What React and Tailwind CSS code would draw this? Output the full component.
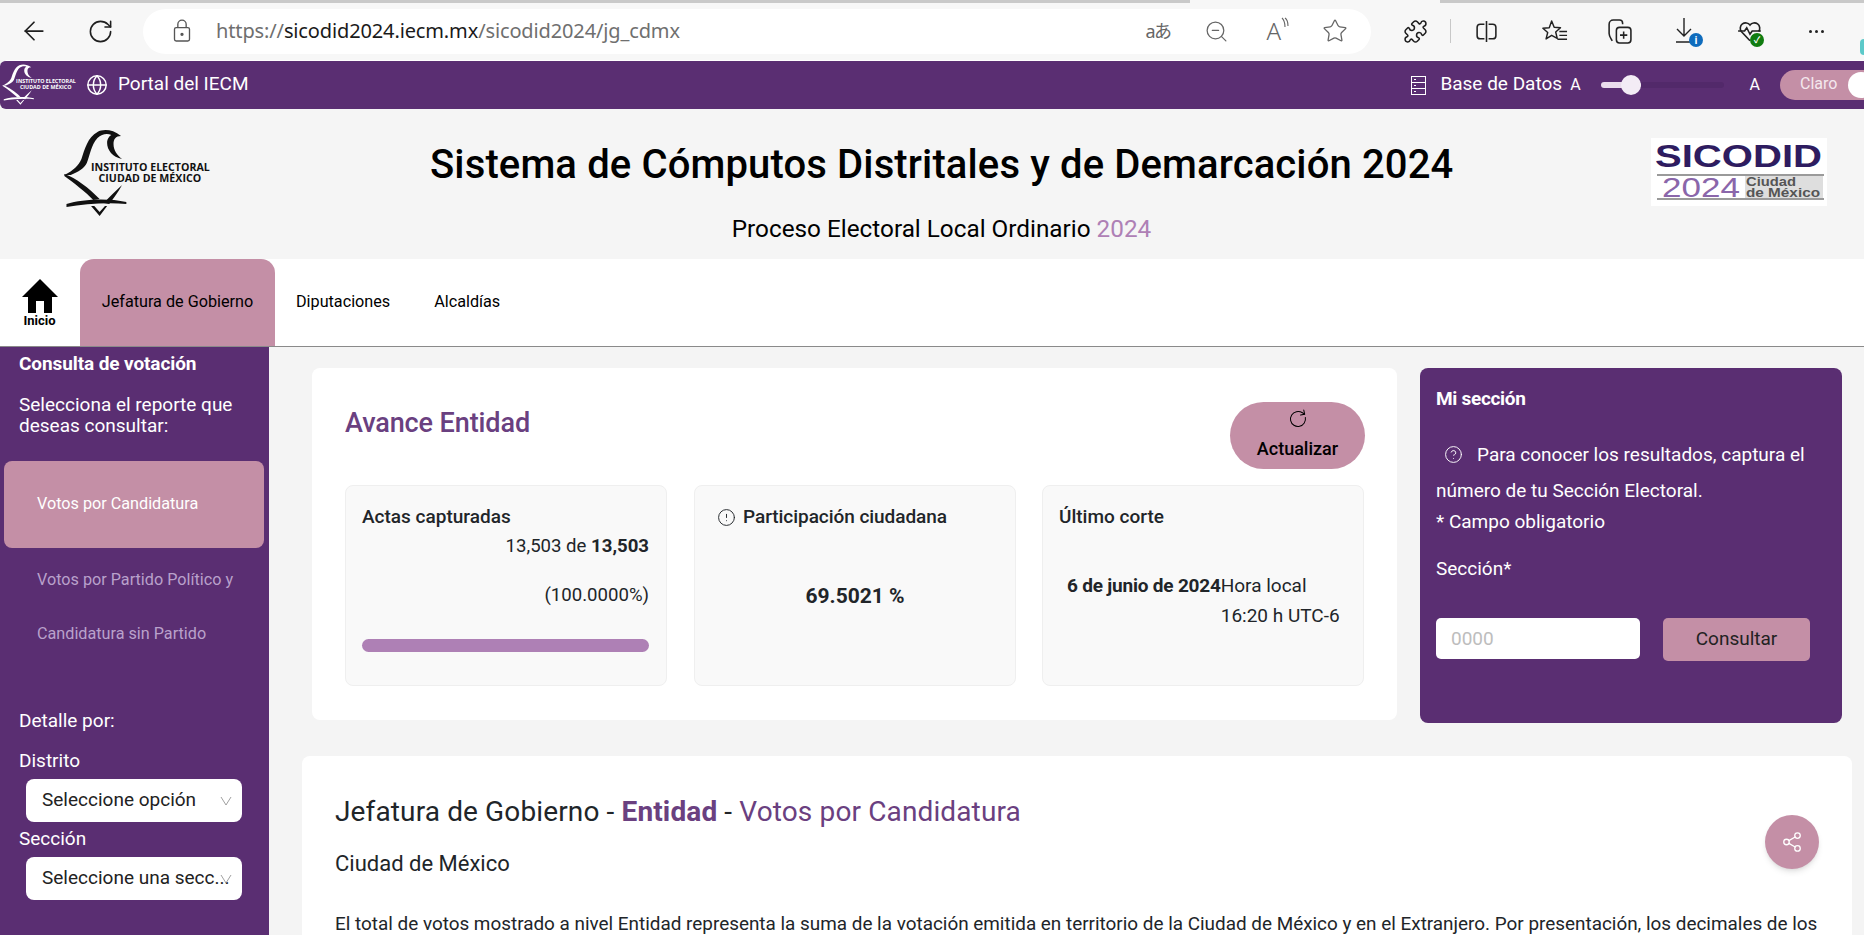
import {
  ArrowLeft, RotateCw, ZoomOut, Star, Puzzle, Globe, CircleAlert, CircleHelp, Share2,
} from 'lucide-react';

function IecmLogo({ color = '#111', className }) {
  return (
    <svg viewBox="0 0 145 100" preserveAspectRatio="none" className={className}>
      <path d="M5 50C14 45 18 41 21 34C24 24 27 12 36 7C41 4 50 4 58 11C53 11 51 14 51 19C51 25 54 30 59 34C50 32 45 25 45 18C45 14 47 11 49 10C45 8 40 9 36 13C30 20 29 30 26 38C24 43 18 47 11 50Z" fill={color} />
      <path d="M5 49C16 53 28 63 38 74L32 75C25 67 14 58 5 51Z" fill={color} />
      <path d="M59 60C55 68 51 73 47 79L42 78C47 72 53 66 59 60Z" fill={color} />
      <path d="M7 79C22 74 46 73 63 77L63 79C45 77 24 79 7 82Z" fill={color} />
      <path d="M30 81L38 91L45 81L43 81L38 87L33 81Z" fill={color} />
      <text x="30" y="45.7" fontFamily="'Open Sans', sans-serif" fontWeight="700" fontSize="10" fill={color} textLength="111" lengthAdjust="spacingAndGlyphs">INSTITUTO ELECTORAL</text>
      <text x="37" y="57.3" fontFamily="'Open Sans', sans-serif" fontWeight="700" fontSize="10" fill={color} textLength="96" lengthAdjust="spacingAndGlyphs">CIUDAD DE MÉXICO</text>
    </svg>
  );
}

function SicodidLogo() {
  return (
    <svg viewBox="0 0 176 68" className="w-[176px] h-[68px] bg-white">
      <text x="4" y="29" fontFamily="'Liberation Sans', sans-serif" fontWeight="700" fontSize="32" fill="#2e1c60" textLength="167" lengthAdjust="spacingAndGlyphs">SICODID</text>
      <rect x="94" y="37" width="78" height="24" fill="#dedede" />
      <rect x="6" y="36" width="167" height="2" fill="#9a9a9a" />
      <rect x="6" y="60" width="167" height="2" fill="#9a9a9a" />
      <text x="11" y="59" fontFamily="'Liberation Sans', sans-serif" fontSize="28" fill="#8a66aa" textLength="78" lengthAdjust="spacingAndGlyphs">2024</text>
      <text x="95" y="48" fontFamily="'Liberation Sans', sans-serif" fontWeight="700" fontSize="12" fill="#555" textLength="50" lengthAdjust="spacingAndGlyphs">Ciudad</text>
      <text x="95" y="59" fontFamily="'Liberation Sans', sans-serif" fontWeight="700" fontSize="12" fill="#555" textLength="74" lengthAdjust="spacingAndGlyphs">de México</text>
    </svg>
  );
}

function BrowserBar() {
  return (
    <div className="h-[60px] bg-[#f7f7f7] relative font-['Noto_Sans','Noto_Sans_CJK_JP',sans-serif]">
      <div className="h-[3px] bg-[#c9c9c9] flex">
        <div className="ml-[1190px] w-[250px] bg-[#f7f7f7]" />
      </div>
      <div className="flex items-center h-[54px] mt-[1px] text-[#1f1f1f]">
        <ArrowLeft size={30} strokeWidth={1.4} className="ml-[19px]" />
        <RotateCw size={27} strokeWidth={1.4} className="ml-[38px]" />
        <div className="ml-[29px] w-[1228px] h-[45px] rounded-[23px] bg-white flex items-center">
          <svg viewBox="0 0 24 28" className="ml-[29px] w-[20px] h-[24px]" fill="none" stroke="#555" strokeWidth="1.6">
            <rect x="3" y="10" width="18" height="16" rx="2" />
            <path d="M7 10V6a5 5 0 0 1 10 0v4" />
            <circle cx="12" cy="18" r="1.2" fill="#555" />
          </svg>
          <span className="ml-[24px] text-[20px] tracking-[-0.13px] text-[#6f6f6f]">
            https://<span className="text-[#1a1a1a]">sicodid2024.iecm.mx</span>/sicodid2024/jg_cdmx
          </span>
          <span className="ml-auto text-[18px] text-[#666] w-[27px] tracking-[-1.5px]">aあ</span>
          <ZoomOut size={25} strokeWidth={1.2} className="ml-[32px] text-[#666]" />
          <span className="ml-[37px] text-[24px] leading-none text-[#666] font-light">A</span>
          <svg viewBox="0 0 8 14" className="w-[8px] h-[14px] -mt-[14px]" fill="none" stroke="#666" strokeWidth="1.1">
            <path d="M1 1c3 3 3 7 3 9M4 1c3 2 3 6 3 8" />
          </svg>
          <Star size={26} strokeWidth={1.2} className="ml-[33px] mr-[23px] text-[#666]" />
        </div>
        <Puzzle size={25} strokeWidth={1.5} className="ml-[32px]" />
        <div className="ml-[22px] w-[1px] h-[24px] bg-[#c8c8c8]" />
        <svg viewBox="0 0 24 24" className="ml-[23px] w-[25px] h-[25px]" fill="none" stroke="#222" strokeWidth="1.5">
          <path d="M10 5H6a3 3 0 0 0-3 3v8a3 3 0 0 0 3 3h4M14 5h4a3 3 0 0 1 3 3v8a3 3 0 0 1-3 3h-4M12 2v20" />
        </svg>
        <svg viewBox="0 0 28 26" className="ml-[43px] w-[27px] h-[25px]" fill="none" stroke="#222" strokeWidth="1.5" strokeLinejoin="round">
          <path d="M10 2l2.6 6.6 6.6.5-5 4.4 1.6 6.7L10 17l-5.8 3.7 1.7-6.7-5-4.4 6.6-.5z" />
          <path d="M18 13h8M18 17h8M16 21h10" />
        </svg>
        <svg viewBox="0 0 26 26" className="ml-[37px] w-[27px] h-[27px]" fill="none" stroke="#222" strokeWidth="1.5">
          <rect x="10" y="9" width="14" height="15" rx="3" />
          <path d="M17 13v7M13.5 16.5h7" />
          <path d="M16 6V5a3 3 0 0 0-3-3H7a4 4 0 0 0-4 4v9c0 3 2 5 3 7" />
        </svg>
        <div className="ml-[40px] relative">
          <svg viewBox="0 0 24 28" className="w-[24px] h-[28px]" fill="none" stroke="#222" strokeWidth="1.4">
            <path d="M11 1v18M4 12l7 7 7-7M3 25h14" />
          </svg>
          <span className="absolute -right-[6px] -bottom-[2px] w-[14px] h-[14px] rounded-full bg-[#0f6cbd] text-white text-[10px] leading-[14px] text-center font-bold">i</span>
        </div>
        <div className="ml-[40px] relative">
          <svg viewBox="0 0 24 24" className="w-[26px] h-[26px]" fill="none" stroke="#222" strokeWidth="1.5">
            <path d="M12 21 4 12.5a5 5 0 0 1 8-6 5 5 0 0 1 8 6" />
            <path d="M1 12h6l2-3 3 6 2-3h8" />
          </svg>
          <span className="absolute -right-[1px] -bottom-[3px] w-[14px] h-[14px] rounded-full bg-[#107c10] text-white text-[9px] leading-[14px] text-center font-bold">✓</span>
        </div>
        <div className="ml-[46px] flex gap-[3px]">
          <span className="w-[3px] h-[3px] rounded-full bg-[#222]" />
          <span className="w-[3px] h-[3px] rounded-full bg-[#222]" />
          <span className="w-[3px] h-[3px] rounded-full bg-[#222]" />
        </div>
      </div>
      <div className="absolute right-0 top-[39px] w-[4px] h-[16px] rounded-l-full bg-[#5cc9c9]" />
    </div>
  );
}

function TopBar() {
  return (
    <div className="h-[49px] bg-[#5a2e72] rounded-l-[6px] border-t border-white flex items-center text-white text-[19px] overflow-hidden">
      <IecmLogo color="#fff" className="w-[78px] h-[47px] shrink-0" />
      <Globe size={22} strokeWidth={1.6} className="ml-[8px] shrink-0" />
      <span className="ml-[10px] pb-[2px]">Portal del IECM</span>
      <svg viewBox="0 0 15 19" className="ml-auto w-[15px] h-[19px] shrink-0" fill="none" stroke="#fff" strokeWidth="1">
        <rect x="0.5" y="0.5" width="14" height="18" />
        <path d="M0.5 6.5h14M0.5 12.5h14M3 3.5h2M3 9.5h2M3 15.5h2" />
      </svg>
      <span className="ml-[14px] pb-[2px]">Base de Datos</span>
      <span className="ml-[8px] text-[16px]">A</span>
      <div className="ml-[20px] w-[123px] h-[6px] rounded bg-[#52296a] relative shrink-0">
        <div className="w-[40px] h-[6px] rounded bg-[#eadcec]" />
        <div className="absolute left-[20px] -top-[7px] w-[20px] h-[20px] rounded-full bg-[#f3ecf5]" />
      </div>
      <span className="ml-[26px] text-[16px]">A</span>
      <div className="ml-[20px] w-[84px] h-[30px] shrink-0 rounded-l-[15px] bg-[#c48fa6] flex items-center overflow-hidden">
        <span className="ml-[20px] text-[16px] text-[#f4e8ee] pb-[2px]">Claro</span>
        <div className="ml-[11px] w-[26px] h-[26px] rounded-full bg-white shrink-0" />
      </div>
    </div>
  );
}

function Header() {
  return (
    <div className="h-[150px] bg-[#f5f5f5] flex">
      <IecmLogo className="w-[155px] h-[100px] ml-[59px] mt-[16px] shrink-0" />
      <div className="w-[1023px] ml-[216px] shrink-0 text-center">
        <h1 className="mt-[28px] text-[40px] leading-[56px] font-medium text-black whitespace-nowrap tracking-[0.13px]">Sistema de Cómputos Distritales y de Demarcación 2024</h1>
        <p className="mt-[19px] text-[24.3px] leading-[34px] text-black">Proceso Electoral Local Ordinario <span className="text-[#ae80b5]">2024</span></p>
      </div>
      <div className="ml-[198px] mt-[29px]">
        <SicodidLogo />
      </div>
    </div>
  );
}

function Nav() {
  return (
    <div className="h-[88px] bg-white border-b border-[#8a8a8a] flex text-[16.2px] text-black">
      <div className="w-[80px] flex flex-col items-center pt-[20px] pr-[1px]">
        <svg viewBox="0 0 36 34" className="w-[36px] h-[34px]" fill="#000">
          <path d="M18 0 36 18H30V34H22V22H14V34H6V18H0Z" />
        </svg>
        <span className="text-[13px] leading-[14px] font-bold mt-[1px]">Inicio</span>
      </div>
      <div className="w-[195px] h-[87px] rounded-t-[14px] bg-[#c48fa6] flex items-center justify-center">Jefatura de Gobierno</div>
      <div className="ml-[21px] flex items-center">Diputaciones</div>
      <div className="ml-[44px] flex items-center">Alcaldías</div>
    </div>
  );
}

function SideSelect({ label }) {
  return (
    <div className="ml-[26px] mr-[27px] h-[43px] rounded-[8px] bg-white flex items-center pl-[16px] text-[19px] text-[#222] whitespace-nowrap">
      <span className="w-[170px] shrink-0">{label}</span>
      <svg viewBox="0 0 12 10" className="ml-[8px] w-[12px] h-[10px] shrink-0" fill="none" stroke="#888" strokeWidth="0.8">
        <path d="M1 1l5 8 5-8" />
      </svg>
    </div>
  );
}

function Sidebar() {
  return (
    <aside className="w-[269px] h-[589px] shrink-0 bg-[#5a2e72] text-white">
      <h2 className="ml-[19px] mt-[5px] text-[19px] leading-[24px] font-bold tracking-[-0.1px]">Consulta de votación</h2>
      <p className="ml-[19px] mt-[18px] text-[19px] leading-[21px]">Selecciona el reporte que deseas consultar:</p>
      <div className="ml-[4px] mt-[25px] w-[260px] h-[87px] rounded-[8px] bg-[#c48fa6] flex items-center pl-[33px] text-[16.2px]">Votos por Candidatura</div>
      <p className="ml-[37px] mt-[22px] text-[16.2px] leading-[20px] text-[#b9a1cb]">Votos por Partido Político y</p>
      <p className="ml-[37px] mt-[34px] text-[16.2px] leading-[20px] text-[#b9a1cb]">Candidatura sin Partido</p>
      <p className="ml-[19px] mt-[66px] text-[19px] leading-[22px]">Detalle por:</p>
      <p className="ml-[19px] mt-[18px] text-[19px] leading-[22px]">Distrito</p>
      <div className="mt-[7px]"><SideSelect label="Seleccione opción" /></div>
      <p className="ml-[19px] mt-[6px] text-[19px] leading-[22px]">Sección</p>
      <div className="mt-[7px]"><SideSelect label="Seleccione una secc..." /></div>
    </aside>
  );
}

function StatCard({ className, children }) {
  return (
    <div className={`w-[322px] h-[201px] rounded-[8px] bg-[#f9f9f9] border border-[#efefef] ${className || ''}`}>
      {children}
    </div>
  );
}

function Avance() {
  return (
    <section className="w-[1085px] h-[352px] rounded-[8px] bg-white pl-[33px] pr-[32px]">
      <div className="flex justify-between">
        <h2 className="mt-[37px] text-[27px] leading-[36px] font-medium text-[#6a4080] tracking-[-0.1px]">Avance Entidad</h2>
        <button className="mt-[34px] w-[135px] h-[67px] rounded-[40px] bg-[#c48fa6] flex flex-col items-center text-[18px] font-medium text-black">
          <RotateCw size={20} strokeWidth={1.2} className="mt-[7px] -rotate-12" />
          <span className="mt-[8px] leading-[24px]">Actualizar</span>
        </button>
      </div>
      <div className="mt-[16px] flex gap-[27px] text-[19px] text-[#212529]">
        <StatCard>
          <h3 className="ml-[16px] mt-[19px] leading-[24px] font-medium">Actas capturadas</h3>
          <p className="mr-[17px] text-right text-[18.6px] leading-[24px] mt-[5px]">13,503 de <b className="font-bold">13,503</b></p>
          <p className="mr-[17px] text-right text-[18.6px] leading-[24px] mt-[25px]">(100.0000%)</p>
          <div className="ml-[16px] mr-[17px] mt-[32px] h-[13px] rounded-[7px] bg-[#ae80b5]" />
        </StatCard>
        <StatCard>
          <h3 className="ml-[22px] mt-[19px] leading-[24px] font-medium flex items-center gap-[7px] tracking-[-0.05px]">
            <CircleAlert size={19} strokeWidth={1.2} />
            Participación ciudadana
          </h3>
          <p className="mt-[53px] text-center text-[21px] leading-[28px] font-bold">69.5021 %</p>
        </StatCard>
        <StatCard className="-ml-[1px]">
          <h3 className="ml-[16px] mt-[19px] leading-[24px] font-medium">Último corte</h3>
          <div className="mt-[42px] ml-[24px] flex">
            <b className="font-bold leading-[30px] tracking-[-0.2px]">6 de junio de 2024</b>
            <div className="leading-[30px]">
              <div>Hora local</div>
              <div>16:20 h UTC-6</div>
            </div>
          </div>
        </StatCard>
      </div>
    </section>
  );
}

function MiSeccion() {
  return (
    <section className="w-[422px] h-[355px] rounded-[8px] bg-[#5a2e72] text-white pl-[16px] text-[19px]">
      <h2 className="pt-[19px] leading-[24px] font-bold tracking-[-0.3px]">Mi sección</h2>
      <p className="mt-[26px] leading-[36px]">
        <CircleHelp size={19} strokeWidth={1.2} className="inline ml-[8px] mr-[14px] -mt-[3px]" />
        Para conocer los resultados, captura el número de tu Sección Electoral.
      </p>
      <p className="leading-[24px] mt-[1px]">* Campo obligatorio</p>
      <p className="mt-[23px] leading-[24px]">Sección*</p>
      <div className="mt-[37px] flex items-start gap-[23px]">
        <input placeholder="0000" className="w-[204px] h-[41px] rounded-[5px] bg-white pl-[15px] text-[19px] placeholder:text-[#bdbdbd] outline-none" />
        <button className="w-[147px] h-[43px] rounded-[5px] bg-[#c48fa6] text-[19px] text-[#222]">Consultar</button>
      </div>
    </section>
  );
}

export default function App() {
  return (
    <div className="w-[1864px] h-[935px] overflow-hidden bg-[#f4f4f4] font-['Roboto',sans-serif] relative">
      <BrowserBar />
      <TopBar />
      <Header />
      <Nav />
      <div className="flex">
        <Sidebar />
        <main className="flex-1 min-w-0">
          <div className="ml-[43px] mt-[21px] flex gap-[23px]">
            <Avance />
            <MiSeccion />
          </div>
          <section className="ml-[33px] w-[1550px] h-[300px] mt-[33px] rounded-[8px] bg-white pl-[33px]">
            <h2 className="pt-[38px] text-[28px] leading-[36px] tracking-[0.13px] text-[#212529]">
              Jefatura de Gobierno - <b className="font-bold text-[#6a4080]">Entidad</b> - <span className="text-[#6a4080]">Votos por Candidatura</span>
            </h2>
            <p className="mt-[18px] text-[22px] leading-[32px] text-[#212529]">Ciudad de México</p>
            <p className="mt-[32px] text-[18.9px] leading-[24px] text-[#212529] whitespace-nowrap">
              El total de votos mostrado a nivel Entidad representa la suma de la votación emitida en territorio de la Ciudad de México y en el Extranjero. Por presentación, los decimales de los
            </p>
          </section>
        </main>
      </div>
      <button className="absolute left-[1765px] top-[815px] w-[54px] h-[54px] rounded-full bg-[#c48fa6] shadow-md flex items-center justify-center text-white">
        <Share2 size={22} strokeWidth={1.4} />
      </button>
    </div>
  );
}
